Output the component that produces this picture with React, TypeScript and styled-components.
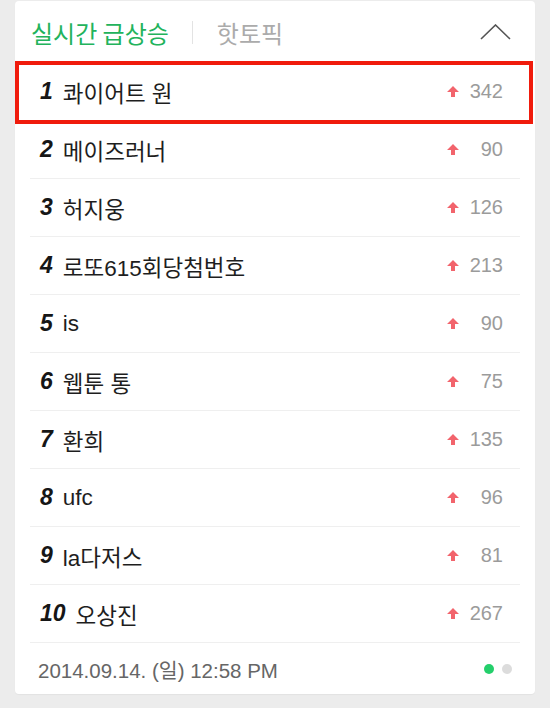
import React from "react";
import styled, { createGlobalStyle } from "styled-components";

const GlobalStyle = createGlobalStyle`
  html, body { margin: 0; padding: 0; background: #ececec; }
  body { font-family: "Liberation Sans", "Noto Sans CJK KR", sans-serif; }
`;

const Page = styled.div`
  padding: 1px 15px 12px 15px;
`;

const Card = styled.section`
  background: #fff;
  border-radius: 4px;
  padding: 0 15px;
  box-shadow: 0 1px 1px rgba(0, 0, 0, 0.04);
`;

const Header = styled.header`
  display: flex;
  align-items: center;
  height: 62px;
  padding-right: 9px;
`;

const Tab = styled.span<{ $active?: boolean }>`
  font-family: "Noto Sans CJK KR", sans-serif;
  font-size: 24px;
  color: ${(p) => (p.$active ? "#22b35c" : "#ababab")};
  padding-left: 1px;
`;

const Separator = styled.span`
  width: 1px;
  height: 23px;
  background: #e3e3e3;
  margin: 0 23px;
`;

const Toggle = styled.button`
  margin-left: auto;
  border: 0;
  background: none;
  padding: 0;
  display: flex;
  width: 31px;
  height: 16px;
  cursor: pointer;
`;

const List = styled.ol`
  list-style: none;
  margin: 0;
  padding: 0;
`;

const Row = styled.li<{ $highlight?: boolean }>`
  position: relative;
  display: flex;
  align-items: center;
  height: 57px;
  padding: 0 17px 0 10px;
  border-bottom: 1px solid #efefef;
  ${(p) =>
    p.$highlight &&
    `
    &::after {
      content: "";
      position: absolute;
      left: -15px;
      right: -13px;
      top: -2px;
      bottom: -4px;
      border: 4px solid #f01b0c;
      pointer-events: none;
    }
  `}
`;

const Rank = styled.span`
  font-family: "Liberation Sans", sans-serif;
  font-weight: bold;
  font-style: italic;
  font-size: 23px;
  color: #161616;
  margin-right: 10px;
`;

const Keyword = styled.span`
  font-family: "Liberation Sans", "Noto Sans CJK KR", sans-serif;
  font-size: 22.5px;
  color: #1e1e1e;
`;

const Change = styled.span`
  margin-left: auto;
  display: flex;
  align-items: center;
`;

const Count = styled.span`
  width: 44px;
  text-align: right;
  font-size: 20px;
  color: #9b9b9b;
  font-family: "Liberation Sans", sans-serif;
`;

const Footer = styled.footer`
  display: flex;
  align-items: center;
  height: 51px;
  padding: 0 8px;
`;

const Stamp = styled.span`
  font-family: "Liberation Sans", "Noto Sans CJK KR", sans-serif;
  font-size: 20.5px;
  color: #666;
`;

const Dots = styled.span`
  margin-left: auto;
  display: flex;
  gap: 8px;
`;

const Dot = styled.span<{ $on?: boolean }>`
  width: 10px;
  height: 10px;
  border-radius: 50%;
  background: ${(p) => (p.$on ? "#24cf6b" : "#dcdcdc")};
`;

const UpArrow = () => (
  <svg width="12" height="11" viewBox="0 0 12 11" aria-hidden>
    <path d="M6 0 L12 6 L8 6 L8 11 L4 11 L4 6 L0 6 Z" fill="#f2646c" />
  </svg>
);

const Chevron = () => (
  <svg width="31" height="16" viewBox="0 0 31 16" aria-hidden>
    <path d="M1 15 L15.5 1 L30 15" fill="none" stroke="#555" strokeWidth="1.6" />
  </svg>
);

const items = [
  { rank: 1, name: "콰이어트 원", count: 342 },
  { rank: 2, name: "메이즈러너", count: 90 },
  { rank: 3, name: "허지웅", count: 126 },
  { rank: 4, name: "로또615회당첨번호", count: 213 },
  { rank: 5, name: "is", count: 90 },
  { rank: 6, name: "웹툰 통", count: 75 },
  { rank: 7, name: "환희", count: 135 },
  { rank: 8, name: "ufc", count: 96 },
  { rank: 9, name: "la다저스", count: 81 },
  { rank: 10, name: "오상진", count: 267 },
];

export default function App() {
  return (
    <>
      <GlobalStyle />
      <Page>
        <Card>
          <Header>
            <Tab $active>실시간 급상승</Tab>
            <Separator />
            <Tab>핫토픽</Tab>
            <Toggle aria-label="접기">
              <Chevron />
            </Toggle>
          </Header>
          <List>
            {items.map((it) => (
              <Row key={it.rank} $highlight={it.rank === 1}>
                <Rank>{it.rank}</Rank>
                <Keyword>{it.name}</Keyword>
                <Change>
                  <UpArrow />
                  <Count>{it.count}</Count>
                </Change>
              </Row>
            ))}
          </List>
          <Footer>
            <Stamp>2014.09.14. (일) 12:58 PM</Stamp>
            <Dots>
              <Dot $on />
              <Dot />
            </Dots>
          </Footer>
        </Card>
      </Page>
    </>
  );
}
